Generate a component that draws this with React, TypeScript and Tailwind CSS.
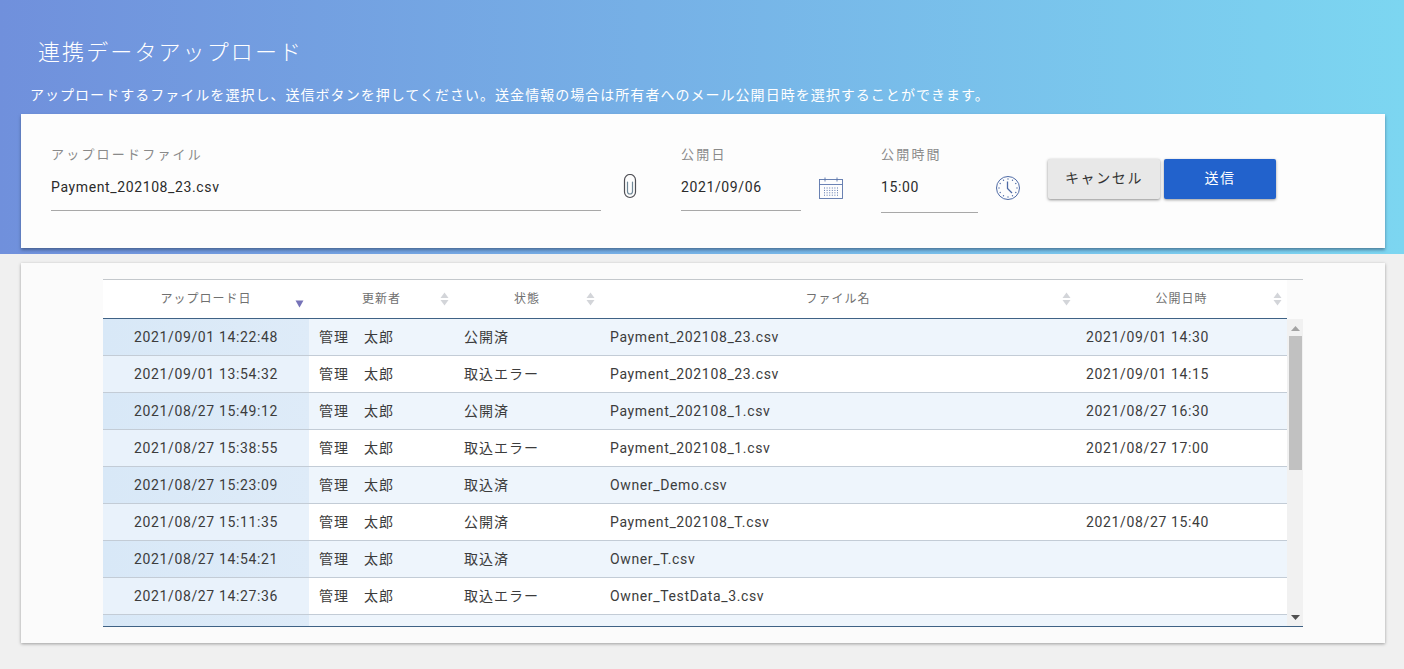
const rows = [
  { uploaded: "2021/09/01 14:22:48", status: "公開済", file: "Payment_202108_23.csv", published: "2021/09/01 14:30" },
  { uploaded: "2021/09/01 13:54:32", status: "取込エラー", file: "Payment_202108_23.csv", published: "2021/09/01 14:15" },
  { uploaded: "2021/08/27 15:49:12", status: "公開済", file: "Payment_202108_1.csv", published: "2021/08/27 16:30" },
  { uploaded: "2021/08/27 15:38:55", status: "取込エラー", file: "Payment_202108_1.csv", published: "2021/08/27 17:00" },
  { uploaded: "2021/08/27 15:23:09", status: "取込済", file: "Owner_Demo.csv", published: "" },
  { uploaded: "2021/08/27 15:11:35", status: "公開済", file: "Payment_202108_T.csv", published: "2021/08/27 15:40" },
  { uploaded: "2021/08/27 14:54:21", status: "取込済", file: "Owner_T.csv", published: "" },
  { uploaded: "2021/08/27 14:27:36", status: "取込エラー", file: "Owner_TestData_3.csv", published: "" },
  { uploaded: "2021/08/27 14:10:02", status: "公開済", file: "Payment_202108_S.csv", published: "2021/08/27 14:30" },
];

const columns = "grid grid-cols-[206px_145px_146px_476px_1fr]";

function PaperclipIcon() {
  return (
    <svg width="14" height="25" viewBox="0 0 14 25" fill="none" stroke="#4f4f55" strokeWidth="1.2" strokeLinecap="round">
      <path d="M12.500 7v11a5.500 5.500 0 0 1-11 0V6a5.500 5.500 0 0 1 11 0v1" />
      <path d="M4.500 8v9.500a2.500 2.500 0 0 0 5 0V8" stroke="#6f8796" />
    </svg>
  );
}

function CalendarIcon() {
  const dots = [];
  for (let y = 0; y < 4; y++) {
    for (let x = 0; x < 6; x++) {
      dots.push(<rect key={`${x}-${y}`} x={5 + x * 2.6} y={10.5 + y * 2.4} width="1" height="1" fill="#5a74ab" stroke="none" />);
    }
  }
  return (
    <svg width="24" height="22" viewBox="0 0 24 22" fill="none" stroke="#5a74ab" strokeWidth="0.9">
      <rect x="0.500" y="2.500" width="23" height="19" />
      <path d="M0.500 7.500h23M6 0.500v4M18 0.500v4" />
      {dots}
    </svg>
  );
}

function ClockIcon() {
  const ticks = [0, 30, 60, 90, 120, 150, 180, 210, 240, 270, 300, 330];
  return (
    <svg width="24" height="24" viewBox="0 0 24 24" fill="none" stroke="#4e6aa5" strokeWidth="1">
      <circle cx="12" cy="12" r="11.500" />
      {ticks.map((deg) => (
        <circle
          key={deg}
          cx={12 + 9 * Math.sin((deg * Math.PI) / 180)}
          cy={12 - 9 * Math.cos((deg * Math.PI) / 180)}
          r="0.700"
          fill="#4e6aa5"
          stroke="none"
        />
      ))}
      <path d="M11.500 5.500V12.500L16 17" strokeWidth="1.300" />
    </svg>
  );
}

function SortIcon({ active }: { active?: boolean }) {
  if (active) {
    return (
      <svg width="9" height="8" viewBox="0 0 9 8" className="absolute right-[5px] top-[20px]">
        <path d="M0.500 0.500h8L4.500 7.500z" fill="#7673b8" />
      </svg>
    );
  }
  return (
    <svg width="9" height="14" viewBox="0 0 9 14" className="absolute right-[5px] top-[12px]">
      <path d="M4.500 0.500L8.500 6H0.500z" fill="#d3d5d9" />
      <path d="M0.500 8h8L4.500 13.500z" fill="#d3d5d9" />
    </svg>
  );
}

function Field({ label, value, width, underlineOffset }: { label: string; value: string; width: string; underlineOffset: string }) {
  return (
    <div className={width}>
      <div className="h-[32px] text-[13px] leading-[20px] tracking-[2.200px] text-[#8a8a8a]">{label}</div>
      <div className={`${underlineOffset} border-b border-[#a8a8a8] text-[14px] leading-[20px] tracking-[0.620px] text-[#2b2b2b]`}>{value}</div>
    </div>
  );
}

function HeaderCell({ label, active }: { label: string; active?: boolean }) {
  return (
    <div className="relative flex h-[38px] items-center justify-center text-[12px] tracking-[1px] text-[#707070]">
      {label}
      <SortIcon active={active} />
    </div>
  );
}

export default function App() {
  return (
    <div
      className="h-[669px] w-[1404px] overflow-hidden bg-[#f0f0f0]"
      style={{ fontFamily: 'Roboto, "Noto Sans CJK JP", sans-serif' }}
    >
      <div className="h-[254px] bg-linear-to-r from-[#7090dc] to-[#7cd6f1] pr-[19px] pl-[21px] pt-[37px]">
        <h1 className="pl-[17px] text-[22px] leading-[32px] font-light tracking-[2.100px] text-white">連携データアップロード</h1>
        <p className="mt-[16px] pl-[9px] text-[14px] leading-[20px] tracking-[1.030px] text-white">
          アップロードするファイルを選択し、送信ボタンを押してください。送金情報の場合は所有者へのメール公開日時を選択することができます。
        </p>
        <div className="mt-[9px] flex h-[134px] items-start bg-[#fdfdfd] pt-[31px] pl-[30px] shadow-[0_2px_3px_rgba(40,60,90,0.55)]">
          <Field label="アップロードファイル" value="Payment_202108_23.csv" width="w-[550px]" underlineOffset="pb-[13px]" />
          <div className="flex w-[80px] pt-[29px] pl-[22px]">
            <PaperclipIcon />
          </div>
          <Field label="公開日" value="2021/09/06" width="w-[120px]" underlineOffset="pb-[13px]" />
          <div className="ml-[18px] w-[62px] pt-[32px]">
            <CalendarIcon />
          </div>
          <Field label="公開時間" value="15:00" width="w-[97px]" underlineOffset="pb-[15px]" />
          <div className="ml-[18px] w-[52px] pt-[31px]">
            <ClockIcon />
          </div>
          <div className="flex gap-[4px] pt-[14px]">
            <button className="h-[40px] w-[112px] rounded-[2px] bg-[#e8e8e8] pb-[2px] text-[14px] tracking-[1.600px] text-[#333333] shadow-[0_1px_3px_rgba(0,0,0,0.45)]">
              キャンセル
            </button>
            <button className="h-[40px] w-[112px] rounded-[2px] bg-[#2262cc] pb-[2px] text-[14px] tracking-[1.600px] text-white shadow-[0_1px_3px_rgba(0,0,0,0.4)]">
              送信
            </button>
          </div>
        </div>
      </div>

      <div className="mt-[9px] mr-[19px] ml-[21px] h-[380px] bg-[#fbfbfb] pt-[16px] pl-[82px] shadow-[0_1px_3px_rgba(0,0,0,0.35)]">
        <div className="w-[1200px] border-t border-b border-t-[#c4c8cc] border-b-[#3f6285]">
          <div className="w-[1184px] border-b border-[#3f6285] bg-white">
            <div className={columns}>
              <HeaderCell label="アップロード日" active />
              <HeaderCell label="更新者" />
              <HeaderCell label="状態" />
              <HeaderCell label="ファイル名" />
              <HeaderCell label="公開日時" />
            </div>
          </div>
          <div className="flex h-[307px] overflow-hidden">
            <div className="w-[1184px]">
              {rows.map((row, i) => (
                <div
                  key={row.uploaded}
                  className={`${columns} h-[37px] border-b border-[#c3ccd6] text-[14px] leading-[36px] tracking-[0.640px] text-[#3c3c3c] ${
                    i % 2 === 0 ? "bg-[#eef5fc]" : "bg-white"
                  }`}
                >
                  <div className={`text-center ${i % 2 === 0 ? "bg-linear-to-r from-[#d8e8f7] to-[#deebf8]" : "bg-[#e9f2fb]"}`}>
                    {row.uploaded}
                  </div>
                  <div className="pl-[10px] tracking-[1px]">管理　太郎</div>
                  <div className="pl-[10px] tracking-[1px]">{row.status}</div>
                  <div className="pl-[10px]">{row.file}</div>
                  <div className="pl-[10px]">{row.published}</div>
                </div>
              ))}
            </div>
            <div className="flex w-[16px] flex-col items-center bg-[#f1f1f1]">
              <svg width="9" height="5" viewBox="0 0 9 5" className="mt-[7px]">
                <path d="M4.500 0L9 5H0z" fill="#a3a3a3" />
              </svg>
              <div className="mt-[5px] h-[134px] w-[13px] bg-[#c1c1c1]" />
              <svg width="9" height="5" viewBox="0 0 9 5" className="mt-[145px]">
                <path d="M0 0h9L4.500 5z" fill="#505050" />
              </svg>
            </div>
          </div>
        </div>
      </div>
    </div>
  );
}
